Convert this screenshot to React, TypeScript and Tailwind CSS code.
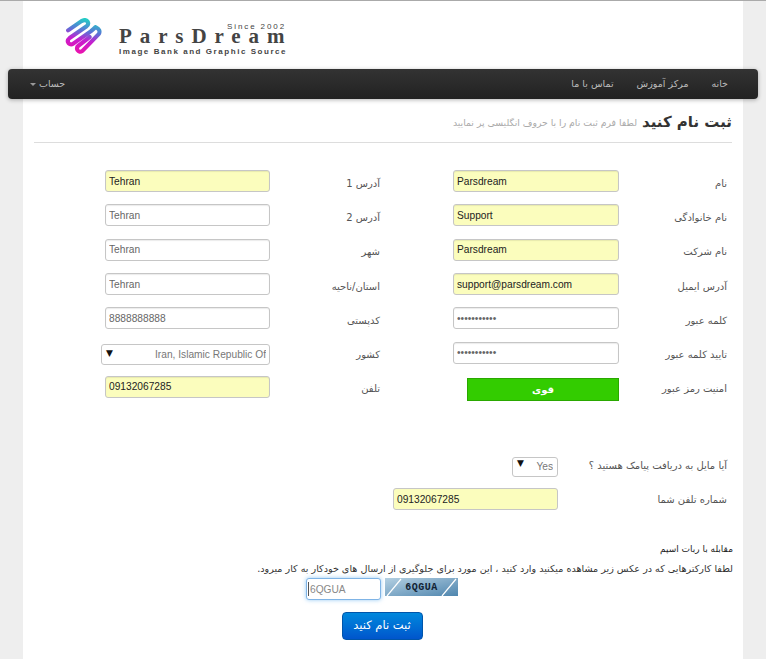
const fa = "font-['DejaVu_Sans',sans-serif]";
const latin = "font-['Liberation_Sans',sans-serif] text-[10.2px]";

function Field({ label, value, fill, type = "text", wide }: { label: string; value: string; fill?: boolean; type?: string; wide?: boolean }) {
  return (
    <div className="flex h-[34.3px] items-center">
      <label className={`${wide ? "w-[110px]" : "w-[108px]"} shrink-0 pt-1 text-[10px] text-[#555]`}>{label}</label>
      <input
        dir="ltr"
        type={type}
        defaultValue={value}
        className={`h-[22px] ${wide ? "w-[165px]" : "w-[166px]"} rounded-[3px] border border-[#c6c6c6] px-[3px] ${latin} shadow-[inset_0_1px_1px_rgba(0,0,0,0.08)] outline-none ${
          fill ? "bg-[#fbfdbd] text-[#222]" : "bg-white text-[#666]"
        }`}
      />
    </div>
  );
}

function Logo() {
  return (
    <svg width="37" height="37" viewBox="0 0 36 36" fill="none" className="-ml-[1px] mt-[17px] shrink-0">
      <defs>
        <linearGradient id="ribbon" x1="22" y1="0" x2="14" y2="36" gradientUnits="userSpaceOnUse">
          <stop offset="0" stopColor="#1fd6c4" />
          <stop offset="0.35" stopColor="#5a74d6" />
          <stop offset="0.6" stopColor="#c41fd0" />
          <stop offset="1" stopColor="#f010a8" />
        </linearGradient>
      </defs>
      <path
        d="M3 12 L16 3 Q20 0.8 22 3.5 Q23.5 6 21 8 L4.5 19.5 Q1.5 22 3.5 24.5 Q5.5 26.5 8 25 L25 13 Q27.5 11 29.5 9 M30 9 Q35 11.5 33 15.5 L17 32 Q14 34 12 31 Q11 28.5 13 27 L24 18.5"
        stroke="url(#ribbon)"
        strokeWidth="4"
        strokeLinecap="round"
        strokeLinejoin="round"
      />
    </svg>
  );
}

export default function App() {
  return (
    <div dir="rtl" className={`${fa} min-h-[659px] overflow-hidden border-t border-[#aaa] bg-[#eeeeee]`}>
      <div className="relative mx-[23px] h-[658px] bg-white">
        <header dir="ltr" className="flex h-[68px] pl-[43px]">
          <Logo />
          <div className="ml-[17px] w-[167px] text-[#444]">
            <div className="mt-[21px] h-[6px] text-right font-['Liberation_Sans',sans-serif] text-[8px] leading-[10px] tracking-[1.9px]">Since 2002</div>
            <div className="h-[17px] whitespace-nowrap font-['Liberation_Serif',serif] text-[21px] font-bold leading-[17px] tracking-[7.9px]">ParsDream</div>
            <div className="mt-[2px] whitespace-nowrap font-['Liberation_Sans',sans-serif] text-[8px] font-bold leading-[9px] tracking-[1.55px]">Image Bank and Graphic Source</div>
          </div>
        </header>

        <nav className="-mx-[15px] flex h-[30px] items-center justify-between rounded-[4px] bg-gradient-to-b from-[#333333] to-[#222222] pl-[22px] pr-[30px] text-[9.5px] text-[#bbbbbb] shadow-[0_1px_4px_rgba(0,0,0,0.3)]">
          <div className="flex gap-[23px]">
            <span>خانه</span>
            <span>مرکز آموزش</span>
            <span>تماس با ما</span>
          </div>
          <div className="flex items-center gap-[3px]">
            <span>حساب</span>
            <span className="h-0 w-0 border-x-[3px] border-t-[3px] border-x-transparent border-t-[#999]" />
          </div>
        </nav>

        <div className="mx-[11px] flex h-[44px] items-center gap-[5px] border-b border-[#ddd] pt-[4px]">
          <h1 className="whitespace-nowrap text-[15px] font-bold text-[#333]">ثبت نام کنید</h1>
          <span className="whitespace-nowrap text-[9.3px] text-[#aaa]">لطفا فرم ثبت نام را با حروف انگلیسی پر نمایید</span>
        </div>

        <form>
          <div className="mt-[21px] flex pr-[16px]">
            <div className="w-[347px]">
              <Field label="نام" value="Parsdream" fill />
              <Field label="نام خانوادگی" value="Support" fill />
              <Field label="نام شرکت" value="Parsdream" fill />
              <Field label="آدرس ایمیل" value="support@parsdream.com" fill />
              <Field label="کلمه عبور" value="password123" type="password" />
              <Field label="تایید کلمه عبور" value="password123" type="password" />
              <div className="flex h-[34.3px] items-center">
                <label className="w-[108px] shrink-0 pt-1 text-[10px] text-[#555]">امنیت رمز عبور</label>
                <div className="mt-[5px] flex h-[23px] w-[152px] items-center justify-center border border-[#2aa800] bg-[#33cc00] text-[10px] font-bold text-white">قوی</div>
              </div>
            </div>
            <div>
              <Field wide label="آدرس 1" value="Tehran" fill />
              <Field wide label="آدرس 2" value="Tehran" />
              <Field wide label="شهر" value="Tehran" />
              <Field wide label="استان/ناحیه" value="Tehran" />
              <Field wide label="کدپستی" value="8888888888" />
              <div className="flex h-[34.3px] items-center">
                <label className="w-[110px] shrink-0 pt-1 text-[10px] text-[#555]">کشور</label>
                <div className="relative">
                  <select className={`h-[21px] w-[169px] appearance-none rounded-[3px] border border-[#c6c6c6] bg-white px-[3px] ${latin} text-[#777] outline-none`}>
                    <option>Iran, Islamic Republic Of</option>
                  </select>
                  <span className="absolute left-[5px] top-[8px] text-[9px] leading-none text-[#111]">▼</span>
                </div>
              </div>
              <Field wide label="تلفن" value="09132067285" fill />
            </div>
          </div>

          <div className="mt-[44px] pr-[16px]">
            <div className="flex h-[34px] items-center">
              <label className="w-[169px] shrink-0 text-[10px] text-[#555]">آیا مایل به دریافت پیامک هستید ؟</label>
              <div className="relative">
                <select dir="ltr" className={`h-[20px] w-[46px] appearance-none rounded-[3px] border border-[#c6c6c6] bg-white pr-[4px] text-right ${latin} text-[#777] outline-none`}>
                  <option>Yes</option>
                </select>
                <span className="absolute left-[5px] top-[6px] text-[9px] leading-none text-[#111]">▼</span>
              </div>
            </div>
            <div className="flex h-[34px] items-center">
              <label className="w-[169px] shrink-0 text-[10px] text-[#555]">شماره تلفن شما</label>
              <input
                dir="ltr"
                defaultValue="09132067285"
                className={`h-[22px] w-[165px] rounded-[3px] border border-[#c6c6c6] bg-[#fbfdbd] px-[3px] ${latin} text-[#222] outline-none`}
              />
            </div>
          </div>

          <div className="mx-[10px] mt-[26px]">
            <h2 className="text-[9px] leading-[14px] text-[#222]">مقابله با ربات اسپم</h2>
            <p className="mt-[6px] whitespace-nowrap text-[9.6px] leading-[14px] text-[#333]">لطفا کارکترهایی که در عکس زیر مشاهده میکنید وارد کنید ، این مورد برای جلوگیری از ارسال های خودکار به کار میرود.</p>
          </div>

          <div dir="ltr" className="mt-[2px] flex items-start justify-center">
            <div className="relative ml-[-2px] flex">
              <input
                defaultValue="6QGUA"
                className={`h-[22px] w-[75px] rounded-[3px] border border-[#7fb4e6] bg-white px-[3px] ${latin} text-[#888] shadow-[0_0_4px_rgba(82,168,236,0.6)] outline-none`}
              />
              <span className="absolute left-[2px] top-[4px] h-[14px] w-px bg-[#555]" />
            </div>
            <div className="relative ml-[4px] flex h-[18px] w-[73px] items-center justify-center overflow-hidden bg-gradient-to-br from-[#b4d0e2] to-[#4f86ae]">
              <svg width="73" height="18" viewBox="0 0 73 18" fill="none" className="absolute left-0 top-0">
                <path d="M2 18 L16 1 M57 18 L71 1" stroke="#fff" strokeWidth="1.2" />
              </svg>
              <span className="relative font-['Liberation_Mono',monospace] text-[10px] font-bold tracking-[0.5px] text-[#123]">6QGUA</span>
            </div>
          </div>

          <div className="mt-[12px] flex justify-center">
            <button type="button" className="ml-[-2px] h-[28px] w-[81px] rounded-[4px] border border-[#0055aa] bg-gradient-to-b from-[#0088dd] to-[#0055cc] text-[11.5px] text-white">ثبت نام کنید</button>
          </div>
        </form>
      </div>
    </div>
  );
}
